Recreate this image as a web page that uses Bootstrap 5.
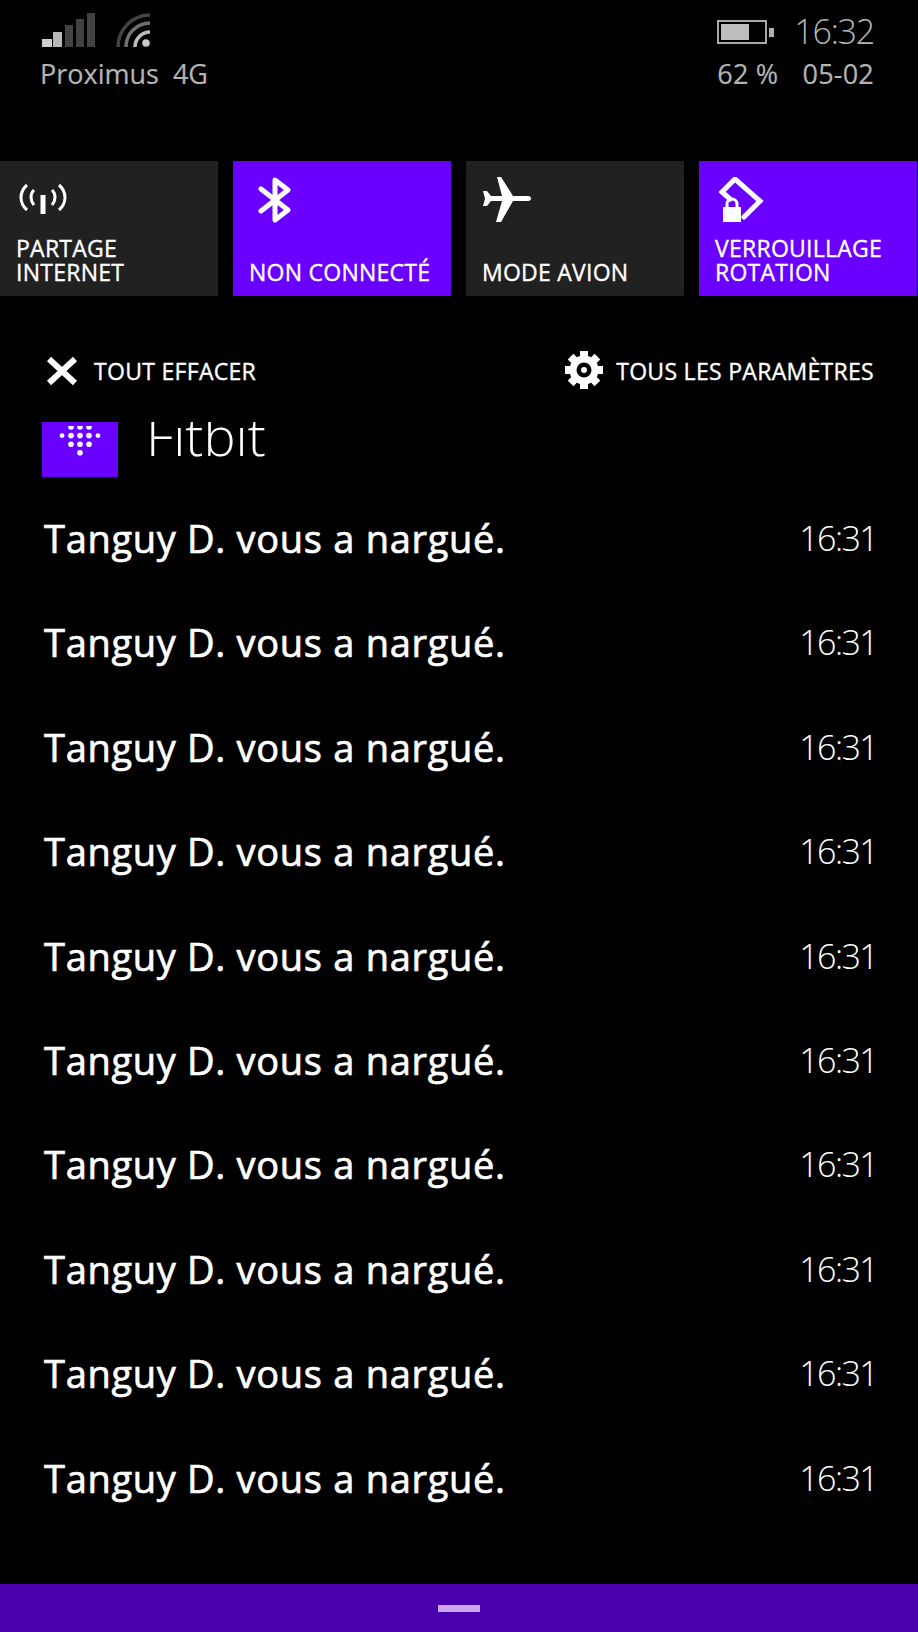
<!DOCTYPE html>
<html lang="fr">
<head>
    <meta charset="UTF-8">
    <meta name="viewport" content="width=device-width, initial-scale=1.0">
    <title>Centre de notifications</title>
    <link href="https://cdn.jsdelivr.net/npm/bootstrap@5.3.0/dist/css/bootstrap.min.css" rel="stylesheet">
    <style>
        html, body { height: 100%; }
        body {
            background: #000;
            color: #fff;
            font-family: "Open Sans", "Noto Sans", sans-serif;
            overflow: hidden;
        }
        .phone { width: 918px; height: 1632px; }
        .status-bar { height: 161px; padding: 13px 44px 0 42px; color: #b4b4b4; }
        .status-line { font-size: 27px; line-height: 36px; margin-top: 9px; -webkit-text-stroke: .2px #b4b4b4; }
        .status-line-right { letter-spacing: .2px; margin-top: 7px; }
        .status-time { font-size: 34px; font-weight: 300; line-height: 36px; letter-spacing: -1.2px; }
        .battery-icon { margin-right: 20px; margin-top: 2px; }
        .tile-row { gap: 15px; height: 135px; }
        .tile { width: 218px; background: #212121; padding: 0 0 0 16px; }
        .tile-on { background: #6a00ff; }
        .tile-icon { height: 75px; padding-top: 14px; }
        .tile-label { font-size: 23px; line-height: 24px; height: 48px; letter-spacing: .25px; -webkit-text-stroke: .35px #fff; }
        .action-row { padding: 59px 44px 0 46px; height: 126px; }
        .action-label { font-size: 23px; line-height: 32px; letter-spacing: .3px; -webkit-text-stroke: .35px #fff; }
        .settings-link { gap: 13px; }
        .app-head { padding-left: 42px; height: 55px; overflow: hidden; }
        .app-tile { width: 76px; height: 55px; background: #6a00ff; }
        .app-name {
            font-size: 54px;
            font-weight: 300;
            line-height: 55px;
            margin-left: 28px;
            margin-top: -14px;
        }
        .notif-list { padding: 31px 41px 0 44px; }
        .notif-row { height: 104.4px; }
        .notif-text { font-size: 38px; line-height: 60px; letter-spacing: .7px; -webkit-text-stroke: .7px #fff; }
        .notif-time { font-size: 34px; font-weight: 300; line-height: 60px; letter-spacing: -1.6px; }
        .bottom-bar { height: 48px; background: #4b00ae; padding-top: 21px; }
        .bottom-handle { width: 42px; height: 7px; background: #c9a6ee; }
    </style>
</head>
<body>
    <div class="phone d-flex flex-column">
        <!-- status -->
        <div class="status-bar d-flex justify-content-between">
            <div>
                <div class="d-flex align-items-end gap-4">
                    <svg width="54" height="34" viewBox="0 0 54 34">
                        <rect x="0" y="26" width="10" height="8" fill="#d0d0d0"/>
                        <rect x="11" y="19" width="9" height="15" fill="#b8b8b8"/>
                        <rect x="23" y="12" width="8" height="22" fill="#414141"/>
                        <rect x="34" y="6" width="8" height="28" fill="#414141"/>
                        <rect x="45" y="0" width="8" height="34" fill="#414141"/>
                    </svg>
                    <svg width="35" height="34" viewBox="0 0 35 34" fill="none" style="margin-left:-4px">
                        <circle cx="30" cy="30" r="3.8" fill="#c8c8c8"/>
                        <path d="M19 34A15 15 0 0 1 34 19" stroke="#bdbdbd" stroke-width="3.5"/>
                        <path d="M10 34A24 24 0 0 1 34 10" stroke="#707070" stroke-width="3.5"/>
                        <path d="M2 34A32 32 0 0 1 34 2" stroke="#444" stroke-width="3.5"/>
                    </svg>
                </div>
                <div class="status-line" style="margin-left:-2px">Proximus&nbsp; 4G</div>
            </div>
            <div>
                <div class="d-flex align-items-center justify-content-end">
                    <svg width="57" height="24" viewBox="0 0 57 24" class="battery-icon">
                        <rect x="1" y="1" width="48" height="22" fill="none" stroke="#a8a8a8" stroke-width="2"/>
                        <rect x="4" y="4" width="28" height="16" fill="#bdbdbd"/>
                        <rect x="52" y="8" width="5" height="9" fill="#b0b0b0"/>
                    </svg>
                    <div class="status-time">16:32</div>
                </div>
                <div class="status-line status-line-right d-flex justify-content-between"><span>62 %</span><span class="ms-3">05-02</span></div>
            </div>
        </div>

        <!-- quick actions -->
        <div class="tile-row d-flex">
            <div class="tile">
                <div class="tile-icon">
                    <svg width="48" height="34" viewBox="0 0 48 34" fill="none" stroke="#fff" stroke-width="3" style="margin:7px 0 0 3px">
                        <path d="M8 3C0 10 0 21 8 28"/><path d="M15 8C11 12 11 18 15 23"/>
                        <path d="M33 8C37 12 37 18 33 23"/><path d="M40 3C48 10 48 21 40 28"/>
                        <path d="M24 13V32" stroke-width="5"/>
                    </svg>
                </div>
                <div class="tile-label">PARTAGE<br>INTERNET</div>
            </div>
            <div class="tile tile-on">
                <div class="tile-icon">
                    <svg width="36" height="46" viewBox="0 0 36 46" fill="none" stroke="#fff" stroke-width="5" stroke-linejoin="round" stroke-linecap="round" style="margin-left:9px;margin-top:2px">
                        <path d="M3 12L30 33L17 43V3L30 13L3 34"/>
                    </svg>
                </div>
                <div class="tile-label d-flex align-items-end">NON CONNECTÉ</div>
            </div>
            <div class="tile">
                <div class="tile-icon">
                    <svg width="50" height="46" viewBox="0 0 50 46" fill="#fff" style="margin-top:2px">
                        <path d="M15 0H19L31 19H46C50 19 50 24 46 24H31L19 45H14L20 24H9L5 29H1L3 21.500L1 14H5L9 19H20Z"/>
                    </svg>
                </div>
                <div class="tile-label d-flex align-items-end">MODE AVION</div>
            </div>
            <div class="tile tile-on">
                <div class="tile-icon">
                    <svg width="46" height="46" viewBox="0 0 46 46" style="margin:2px 0 0 4px">
                        <path d="M11 22L3 15L16 2L41 24L25 40" fill="none" stroke="#fff" stroke-width="5" stroke-linecap="round" stroke-linejoin="miter"/>
                        <rect x="4" y="30" width="18" height="15" fill="#fff"/>
                        <path d="M8 31V27A5 5 0 0 1 18 27V31" fill="none" stroke="#fff" stroke-width="3"/>
                    </svg>
                </div>
                <div class="tile-label">VERROUILLAGE<br>ROTATION</div>
            </div>
        </div>

        <!-- clear / settings -->
        <div class="action-row d-flex justify-content-between">
            <div class="d-flex align-items-start gap-3">
                <svg width="32" height="30" viewBox="0 0 32 30" style="margin-top:1px">
                    <path d="M3 3L29 27M29 3L3 27" stroke="#fff" stroke-width="6"/>
                </svg>
                <span class="action-label">TOUT EFFACER</span>
            </div>
            <div class="d-flex align-items-start settings-link">
                <svg width="38" height="38" viewBox="0 0 38 38" style="margin-top:-4px">
                    <g fill="#fff">
                        <rect x="15" y="0" width="8" height="8"/>
                        <rect x="15" y="0" width="8" height="8" transform="rotate(45 19 19)"/>
                        <rect x="15" y="0" width="8" height="8" transform="rotate(90 19 19)"/>
                        <rect x="15" y="0" width="8" height="8" transform="rotate(135 19 19)"/>
                        <rect x="15" y="0" width="8" height="8" transform="rotate(180 19 19)"/>
                        <rect x="15" y="0" width="8" height="8" transform="rotate(225 19 19)"/>
                        <rect x="15" y="0" width="8" height="8" transform="rotate(270 19 19)"/>
                        <rect x="15" y="0" width="8" height="8" transform="rotate(315 19 19)"/>
                    </g>
                    <circle cx="19" cy="19" r="11" fill="none" stroke="#fff" stroke-width="7"/>
                    <circle cx="19" cy="19" r="3" fill="#fff"/>
                </svg>
                <span class="action-label">TOUS LES PARAMÈTRES</span>
            </div>
        </div>

        <!-- app header, cut off by the scroll position -->
        <div class="app-head d-flex">
            <div class="app-tile d-flex justify-content-center">
                <svg width="44" height="36" viewBox="0 0 44 36" fill="#fff" id="fitbitDots" class="mt-1"></svg>
            </div>
            <div class="app-name">Fitbit</div>
        </div>

        <div class="notif-list flex-grow-1" id="notifList"></div>

        <div class="bottom-bar d-flex justify-content-center">
            <div class="bottom-handle"></div>
        </div>
    </div>

    <script>
        // Fitbit logo dots, row by row
        const dots = document.getElementById('fitbitDots');
        [[13, 22, 31], [4, 13, 22, 31, 40], [13, 22, 31], [22]].forEach((row, i) => {
            row.forEach((x) => {
                const big = x > 4 && x < 40;
                const c = document.createElementNS('http://www.w3.org/2000/svg', 'circle');
                c.setAttribute('cx', x);
                c.setAttribute('cy', 1 + i * 8.6);
                c.setAttribute('r', big ? 2.8 : 2.4);
                dots.appendChild(c);
            });
        });

        const list = document.getElementById('notifList');
        for (let i = 0; i < 10; i++) {
            const row = document.createElement('div');
            row.className = 'notif-row d-flex justify-content-between';
            row.innerHTML = '<span class="notif-text">Tanguy D. vous a nargué.</span><span class="notif-time">16:31</span>';
            list.appendChild(row);
        }
    </script>
    <script src="https://cdn.jsdelivr.net/npm/bootstrap@5.3.0/dist/js/bootstrap.bundle.min.js"></script>
</body>
</html>
